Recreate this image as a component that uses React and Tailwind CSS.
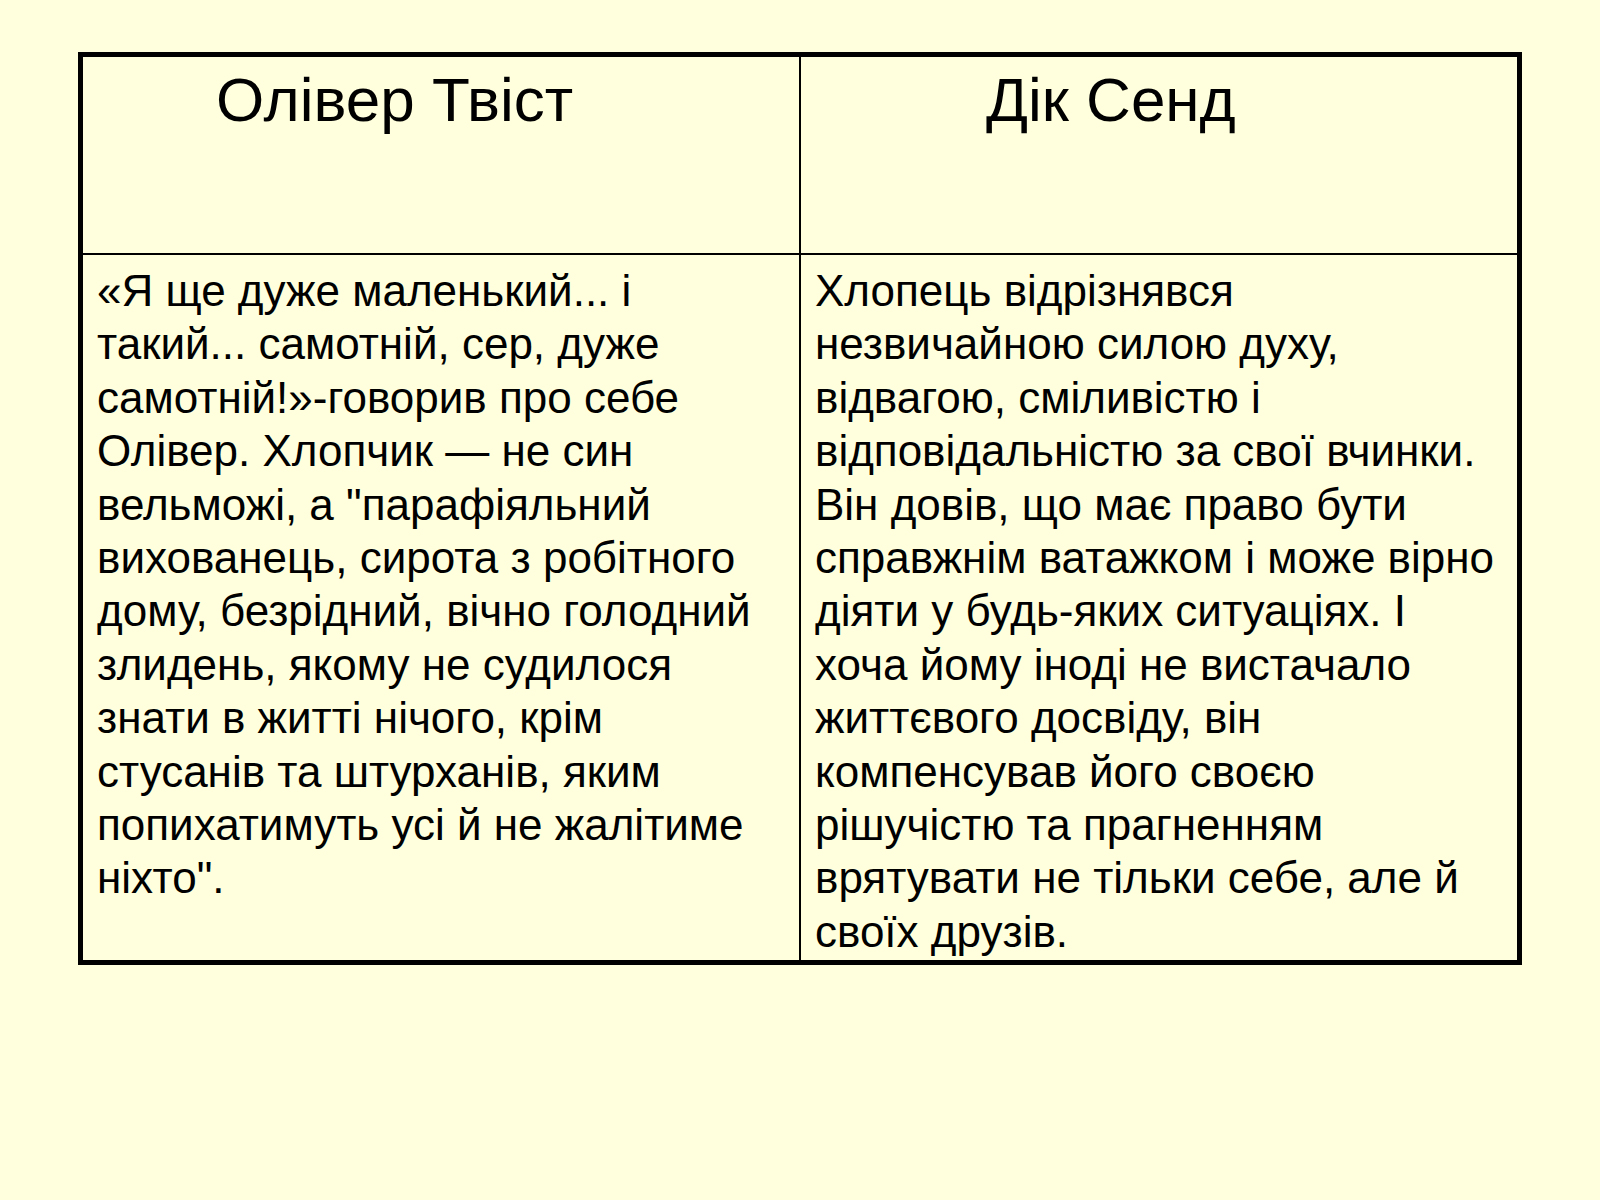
import React from "react";

const left = [
  "«Я ще дуже маленький... і",
  "такий... самотній, сер, дуже",
  "самотній!»-говорив про себе",
  "Олівер. Хлопчик — не син",
  "вельможі, а \"парафіяльний",
  "вихованець, сирота з робітного",
  "дому, безрідний, вічно голодний",
  "злидень, якому не судилося",
  "знати в житті нічого, крім",
  "стусанів та штурханів, яким",
  "попихатимуть усі й не жалітиме",
  "ніхто\".",
];

const right = [
  "Хлопець відрізнявся",
  "незвичайною силою духу,",
  "відвагою, сміливістю і",
  "відповідальністю за свої вчинки.",
  "Він довів, що має право бути",
  "справжнім ватажком і може вірно",
  "діяти у будь-яких ситуаціях. І",
  "хоча йому іноді не вистачало",
  "життєвого досвіду, він",
  "компенсував його своєю",
  "рішучістю та прагненням",
  "врятувати не тільки себе, але й",
  "своїх друзів.",
];

export default function App() {
  return (
    <div
      className="w-[1600px] h-[1200px] bg-[#FFFFDD] text-black pt-[52px] pl-[78px]"
      style={{ fontFamily: '"Liberation Sans", Arial, sans-serif' }}
    >
      <div className="w-[1444px] border-[5px] border-black grid grid-cols-[718px_1fr]">
        <div className="h-[198px] border-r-2 border-b-2 border-black pl-[133px] pt-[12px] text-[62px] leading-[62px] whitespace-nowrap">
          Олівер Твіст
        </div>
        <div className="h-[198px] border-b-2 border-black pl-[185px] pt-[12px] text-[62px] leading-[62px] whitespace-nowrap">
          Дік Сенд
        </div>
        <div className="border-r-2 border-black pl-[14px] pt-[9px] pb-[2px] text-[44px] leading-[53.4px]">
          {left.map((l, i) => (
            <div key={i} className="whitespace-nowrap">{l}</div>
          ))}
        </div>
        <div className="pl-[14px] pt-[9px] pb-[2px] text-[44px] leading-[53.4px]">
          {right.map((l, i) => (
            <div key={i} className="whitespace-nowrap">{l}</div>
          ))}
        </div>
      </div>
    </div>
  );
}
